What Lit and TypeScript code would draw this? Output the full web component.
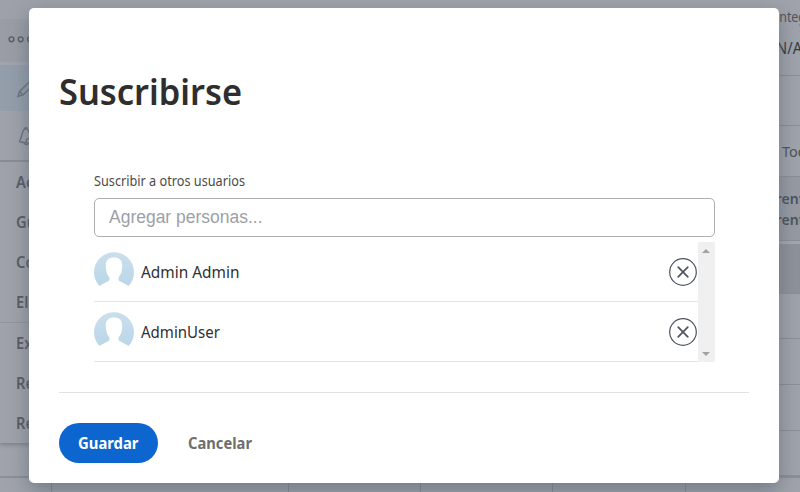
import { LitElement, html, css, svg } from "lit";
import { customElement, property } from "lit/decorators.js";

/** A single line of text set to an exact width, keeping its glyph height. */
@customElement("fit-text")
class FitText extends LitElement {
  @property() text = "";
  @property({ type: Number }) width = 100;
  @property({ type: Number }) height = 20;
  @property({ type: Number }) baseline = 15;
  static styles = css`
    :host { display: block; flex: none; }
    svg { display: block; overflow: visible; }
    text { fill: currentColor; }
  `;
  render() {
    return html`<svg width=${this.width} height=${this.height}>
      ${svg`<text x="0" y=${this.baseline} textLength=${this.width} lengthAdjust="spacingAndGlyphs">${this.text}</text>`}
    </svg>`;
  }
}

@customElement("menu-panel")
class MenuPanel extends LitElement {
  static styles = css`
    :host { display: block; width: 200px; color: #565b65; font: 600 16px "Noto Sans", sans-serif; }
    .bar { height: 19px; background: #9ea1a9; }
    .dots { height: 43px; display: flex; background: #9a9da5; }
    .gap { height: 3px; background: #9fa4ad; }
    .cell { height: 46px; display: flex; }
    .on { background: #949eab; }
    .bell { height: 51px; background: #9fa2aa; border-bottom: 2px solid #898d96; box-sizing: border-box; }
    .menu { height: 281px; background: #a0a2aa; box-shadow: 0 2px 4px #7b818c; display: flex; flex-direction: column; }
    .item { height: 40px; line-height: 40px; padding-left: 16px; }
    .narrow { display: inline-block; transform: scaleX(.92); transform-origin: 0 0; }
    .sep { height: 1px; background: #92959e; }
    svg { display: block; fill: none; stroke: #6a707c; stroke-width: 1.4; }
    .dots svg { stroke: #585d68; }
  `;
  item(t: string) {
    return html`<div class="item"><span class="narrow">${t}</span></div>`;
  }
  render() {
    return html`
      <div class="bar"></div>
      <div class="dots"><svg width="40" height="43">
        <circle cx="11.5" cy="20.3" r="2.4" /><circle cx="20.7" cy="20.3" r="2.4" /><circle cx="30" cy="20.3" r="2.4" />
      </svg></div>
      <div class="gap"></div>
      <div class="cell on"><svg width="40" height="46">
        <path d="M18 31.5 L19.6 26.4 L29.5 16.8 L33 20.2 L23 30 Z M19.6 26.4 L23 30" />
      </svg></div>
      <div class="bell"><svg width="40" height="49">
        <path d="M26 32 L20 30.8 C19.2 30.4 19.5 29.6 20.2 28.6 C21.8 26 22 22 23.6 19 C24.2 18 25 17.8 26 17.8 C27 17.8 28.4 19 30 23" />
        <path d="M24.6 17.8 C24.6 16.2 27.2 16.2 27.2 17.8 M24.4 32 C24.6 34 27.4 34 28.4 32.6" /><circle cx="28.6" cy="30" r="2.4" />
      </svg></div>
      <div class="menu">
        ${["Actualizar", "Guardar", "Copiar", "Eliminar"].map((t) => this.item(t))}
        <div class="sep"></div>
        ${["Exportar", "Recalcular", "Relacionar"].map((t) => this.item(t))}
      </div>`;
  }
}

@customElement("side-grid")
class SideGrid extends LitElement {
  static styles = css`
    :host { display: flex; flex-direction: column; width: 60px; color: #4d525b; font: 14px "Noto Sans", sans-serif; }
    div { flex: none; box-sizing: border-box; border-bottom: 1px solid #8b8f98; white-space: nowrap; }
    .top { height: 76px; padding: 7px 0 0 35px; }
    .intro, .value { display: block; height: 20px; line-height: 20px; transform: scaleX(.92); transform-origin: 0 0; }
    .intro { font-size: 13.5px; }
    .value { font-size: 16px; margin: 11px 0 0 1px; color: #34383f; }
    .blank { height: 50px; }
    .tab { height: 51px; line-height: 50px; padding-left: 42px; font-size: 14.5px; }
    .head { height: 64px; background: #979aa3; padding: 11px 0 0 19px; font-weight: 600; line-height: 21px; font-size: 14px; }
    .thin { height: 3px; background: #a4a7af; border: 0; }
    .sel { height: 50px; background: #8f929a; }
    .r { height: 46px; }
    .last { height: 46px; border-bottom-width: 2px; }
    .r1 { height: 45px; }
  `;
  render() {
    return html`
      <div class="top"><span class="intro">Integración</span><span class="value">N/A</span></div>
      <div class="blank"></div>
      <div class="tab">Todos</div>
      <div class="head">Parent<br />Parent</div>
      <div class="thin"></div>
      <div class="sel"></div>
      <div class="r1"></div><div class="r"></div><div class="r"></div><div class="last"></div>`;
  }
}

@customElement("person-row")
class PersonRow extends LitElement {
  @property() name = "";
  @property({ type: Number }) width = 98;
  static styles = css`
    :host { display: flex; align-items: center; height: 60px; box-sizing: border-box; border-bottom: 1px solid #e4e4e4; padding-right: 1px; }
    svg { display: block; flex: none; }
    .name { margin-left: 7px; color: #2f3033; font: 15.5px "Noto Sans", sans-serif; flex: 1; }
    .close { fill: none; stroke: #4d535f; }
  `;
  render() {
    return html`
      <svg width="40" height="40" viewBox="0 0 40 40">
        <defs><linearGradient id="g" x1="0" y1="0" x2="0" y2="1"><stop offset="0" stop-color="#cbdfec" /><stop offset="1" stop-color="#b9d6e8" /></linearGradient></defs>
        <path fill="url(#g)" d="M5.5 34 A20 20 0 1 1 34.5 34 C31.5 31.8 28 30.4 25.1 28.8 C24.2 28 24.5 26.2 24.8 25 C27.6 22 28.2 17 28.2 13 C28.2 8 25 5.4 20 5.4 C15 5.4 11.8 8 11.8 13 C11.8 17 12.4 22 15.2 25 C15.5 26.2 15.8 28 14.9 28.8 C12 30.4 8.5 31.8 5.5 34 Z" />
      </svg>
      <fit-text class="name" .text=${this.name} .width=${this.width} .height=${24} .baseline=${18}></fit-text>
      <svg class="close" width="28" height="28" viewBox="0 0 28 28">
        <circle cx="14" cy="14" r="13.3" stroke-width="1.2" />
        <path d="M9.2 9.2 L18.8 18.8 M18.8 9.2 L9.2 18.8" stroke-width="1.7" stroke-linecap="round" />
      </svg>`;
  }
}

@customElement("app-root")
class AppRoot extends LitElement {
  static styles = css`
    :host { display: block; position: relative; width: 800px; height: 492px; overflow: hidden; background: #a0a3ab; }
    .page { height: 492px; display: grid; grid-template-columns: 200px 1fr 60px; grid-template-rows: 476px 16px; }
    side-grid { grid-column: 3; }
    .foot { grid-column: 1 / 4; display: flex; border-top: 2px solid #8b8f98; box-sizing: border-box; }
    .foot i { box-sizing: border-box; border-right: 1px solid #848b94; width: 132px; }
    .foot .a { width: 52px; }
    .foot .b { width: 237px; }
    .foot .c { width: 133px; }
    .dialog { position: absolute; left: 29px; top: 8px; width: 750px; height: 475px; box-sizing: border-box; background: #fff; border-radius: 5px;
      box-shadow: 0 7px 20px rgba(82, 97, 109, .62); padding: 0 30px; display: flex; flex-direction: column; }
    .title { margin-top: 60px; font: 600 36.5px "Noto Sans", sans-serif; color: #2e2e2e; }
    .form { margin: 54px 34px 0 35px; height: 192px; }
    .label { margin-left: -0.5px; font: 13.8px "Noto Sans", sans-serif; color: #4b4b4b; }
    .field { margin-top: 8px; height: 39px; box-sizing: border-box; border: 1px solid #aeaeb1; border-radius: 5px; padding: 7px 14px;
      font: 18px "Liberation Sans", sans-serif; color: #9c9fa7; }
    .list { margin-top: 5px; height: 120px; display: flex; }
    .rows { flex: 1; }
    .scroll { width: 17px; height: 120px; background: #f0f0f0; display: flex; flex-direction: column; justify-content: space-between; align-items: center; padding: 7px 1px 6px 0; box-sizing: border-box; }
    .scroll svg { display: block; fill: #a2a2a2; }
    .actions { margin-top: 28px; border-top: 1px solid #e1e1e1; padding-top: 30px; display: flex; align-items: center; font: 700 15.5px "Noto Sans", sans-serif; }
    .save { width: 99px; height: 40px; border-radius: 20px; background: #0d66d0; color: #fff; display: flex; align-items: center; justify-content: center; }
    .cancel { margin-left: 30px; color: #6e6e6e; }
  `;
  render() {
    return html`
      <div class="page">
        <menu-panel></menu-panel>
        <side-grid></side-grid>
        <div class="foot"><i class="a"></i><i class="b"></i><i></i><i></i><i class="c"></i></div>
      </div>
      <div class="dialog">
        <fit-text class="title" .text=${"Suscribirse"} .width=${183} .height=${50} .baseline=${37}></fit-text>
        <div class="form">
          <fit-text class="label" .text=${"Suscribir a otros usuarios"} .width=${151} .height=${18} .baseline=${14}></fit-text>
          <div class="field"><fit-text .text=${"Agregar personas..."} .width=${153.5} .height=${23} .baseline=${17}></fit-text></div>
          <div class="list">
            <div class="rows">
              <person-row .name=${"Admin Admin"} .width=${98.5}></person-row>
              <person-row .name=${"AdminUser"} .width=${79}></person-row>
            </div>
            <div class="scroll">
              <svg width="8" height="4"><path d="M0 4 L4 0 L8 4 Z" /></svg>
              <svg width="8" height="4"><path d="M0 0 L4 4 L8 0 Z" /></svg>
            </div>
          </div>
        </div>
        <div class="actions">
          <div class="save"><fit-text .text=${"Guardar"} .width=${60.5} .height=${24} .baseline=${18}></fit-text></div>
          <fit-text class="cancel" .text=${"Cancelar"} .width=${64} .height=${24} .baseline=${18}></fit-text>
        </div>
      </div>`;
  }
}
